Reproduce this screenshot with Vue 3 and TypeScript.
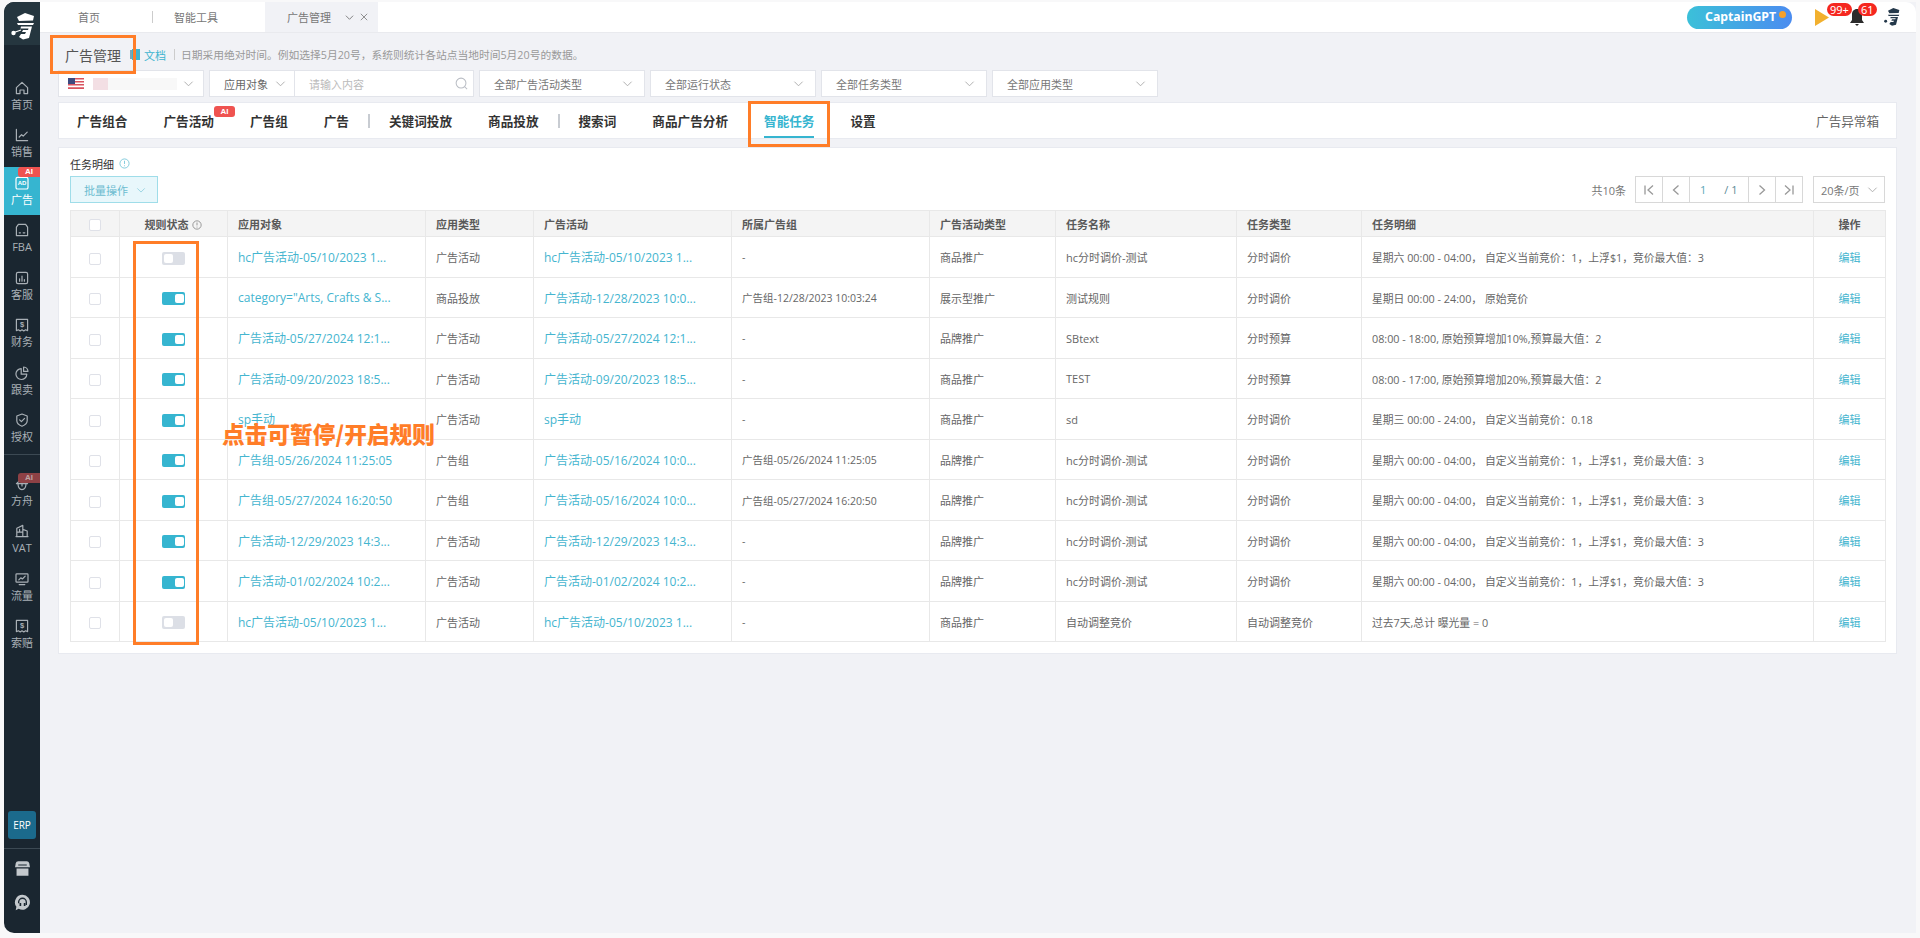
<script setup lang="ts">
interface NavItem { label: string; icon: string; active?: boolean; ai?: boolean; dim?: boolean; gap?: boolean }
const nav: NavItem[] = [
  { label: '首页', icon: 'home' },
  { label: '销售', icon: 'sales' },
  { label: '广告', icon: 'ad', active: true, ai: true },
  { label: 'FBA', icon: 'fba' },
  { label: '客服', icon: 'service' },
  { label: '财务', icon: 'money' },
  { label: '跟卖', icon: 'pie' },
  { label: '授权', icon: 'shield' },
  { label: '方舟', icon: 'ark', ai: true, dim: true, gap: true },
  { label: 'VAT', icon: 'vat' },
  { label: '流量', icon: 'traffic' },
  { label: '索赔', icon: 'money' },
]
const tabsA = ['广告组合', '广告活动', '广告组', '广告']
const tabsB = ['关键词投放', '商品投放']
const tabsC = ['搜索词', '商品广告分析', '智能任务', '设置']
const selects = ['全部广告活动类型', '全部运行状态', '全部任务类型', '全部应用类型']
const heads = ['应用对象', '应用类型', '广告活动', '所属广告组', '广告活动类型', '任务名称', '任务类型', '任务明细']
const d1 = '星期六 00:00 - 04:00， 自定义当前竞价：1，上浮$1，竞价最大值：3'
const hc = 'hc广告活动-05/10/2023 1...'
interface Row { on: boolean; target: string; type: string; camp: string; group: string; ctype: string; name: string; ttype: string; detail: string }
const rows: Row[] = [
  { on: false, target: hc, type: '广告活动', camp: hc, group: '-', ctype: '商品推广', name: 'hc分时调价-测试', ttype: '分时调价', detail: d1 },
  { on: true, target: 'category="Arts, Crafts & S...', type: '商品投放', camp: '广告活动-12/28/2023 10:0...', group: '广告组-12/28/2023 10:03:24', ctype: '展示型推广', name: '测试规则', ttype: '分时调价', detail: '星期日 00:00 - 24:00， 原始竞价' },
  { on: true, target: '广告活动-05/27/2024 12:1...', type: '广告活动', camp: '广告活动-05/27/2024 12:1...', group: '-', ctype: '品牌推广', name: 'SBtext', ttype: '分时预算', detail: '08:00 - 18:00, 原始预算增加10%,预算最大值：2' },
  { on: true, target: '广告活动-09/20/2023 18:5...', type: '广告活动', camp: '广告活动-09/20/2023 18:5...', group: '-', ctype: '商品推广', name: 'TEST', ttype: '分时预算', detail: '08:00 - 17:00, 原始预算增加20%,预算最大值：2' },
  { on: true, target: 'sp手动', type: '广告活动', camp: 'sp手动', group: '-', ctype: '商品推广', name: 'sd', ttype: '分时调价', detail: '星期三 00:00 - 24:00， 自定义当前竞价：0.18' },
  { on: true, target: '广告组-05/26/2024 11:25:05', type: '广告组', camp: '广告活动-05/16/2024 10:0...', group: '广告组-05/26/2024 11:25:05', ctype: '品牌推广', name: 'hc分时调价-测试', ttype: '分时调价', detail: d1 },
  { on: true, target: '广告组-05/27/2024 16:20:50', type: '广告组', camp: '广告活动-05/16/2024 10:0...', group: '广告组-05/27/2024 16:20:50', ctype: '品牌推广', name: 'hc分时调价-测试', ttype: '分时调价', detail: d1 },
  { on: true, target: '广告活动-12/29/2023 14:3...', type: '广告活动', camp: '广告活动-12/29/2023 14:3...', group: '-', ctype: '品牌推广', name: 'hc分时调价-测试', ttype: '分时调价', detail: d1 },
  { on: true, target: '广告活动-01/02/2024 10:2...', type: '广告活动', camp: '广告活动-01/02/2024 10:2...', group: '-', ctype: '品牌推广', name: 'hc分时调价-测试', ttype: '分时调价', detail: d1 },
  { on: false, target: hc, type: '广告活动', camp: hc, group: '-', ctype: '商品推广', name: '自动调整竞价', ttype: '自动调整竞价', detail: '过去7天,总计 曝光量 = 0' },
]
</script>

<template>
  <div class="shell">
    <aside class="side">
      <div class="logo">
        <svg width="24" height="27" viewBox="0 0 24 27">
          <path d="M6 4 14 0l9 3-1 4.500L8 8z" fill="#fff" />
          <path d="M6 10h17l-1 2H7z" fill="#fff" />
          <path d="M10 13.500h11L18 25l-6 1.500-4-2.500 2-3h4l1-2H11l1-2h5l.5-1.500H9.500z" fill="#fff" />
          <circle cx="2.500" cy="20" r="2.200" fill="#fff" />
          <path d="M3 19.500 10 17" stroke="#fff" stroke-width="1.300" />
        </svg>
      </div>
      <nav class="nav">
        <template v-for="n in nav" :key="n.label">
          <div v-if="n.gap" class="nav-line"></div>
          <div class="nav-item" :class="{ active: n.active }">
            <span v-if="n.ai" class="nav-ai" :class="{ dim: n.dim }">AI</span>
            <svg class="nav-icon" viewBox="0 0 20 20" fill="none" stroke="currentColor" stroke-width="1.500" stroke-linejoin="round" stroke-linecap="round">
              <template v-if="n.icon === 'home'"><path d="M3 9.500 10 3l7 6.500V17h-4.500v-4.500h-5V17H3z" /></template>
              <template v-else-if="n.icon === 'sales'"><path d="M3 3v14h14" /><path d="M6.500 12.500 9.500 9.500l2 2 5-5" /></template>
              <template v-else-if="n.icon === 'ad'"><rect x="2.500" y="3" width="15" height="14.500" rx="2" /><text x="10" y="13" text-anchor="middle" font-size="7.500" font-weight="700" fill="currentColor" stroke="none" font-family="Liberation Sans, sans-serif">AD</text></template>
              <template v-else-if="n.icon === 'fba'"><path d="M3 6.500 5.500 3h9L17 6.500V17H3z" /><path d="M6.500 13.500h1.500M11.500 13.500h2" /></template>
              <template v-else-if="n.icon === 'service'"><rect x="3" y="3" width="14" height="14" rx="2" /><path d="M7 14v-3M10 14V7.500M13 14v-2" /></template>
              <template v-else-if="n.icon === 'money'"><path d="M3 3h14v14l-2.500-1-2.300 1.500L10 16l-2.200 1.500L5.500 16 3 17z" /><text x="10" y="13" text-anchor="middle" font-size="9.500" font-weight="700" fill="currentColor" stroke="none" font-family="Liberation Sans, sans-serif">$</text></template>
              <template v-else-if="n.icon === 'pie'"><path d="M9 4.500a6.800 6.800 0 1 0 7 7H9z" /><path d="M12 2.500a6 6 0 0 1 5.500 5.500H12z" /></template>
              <template v-else-if="n.icon === 'shield'"><path d="M10 2.500 16.500 5v6c0 3-3 5.500-6.500 6.800C6.500 16.500 3.500 14 3.500 11V5z" /><path d="m7 9.800 2.300 2.200L13.200 8" /></template>
              <template v-else-if="n.icon === 'ark'"><path d="M3 9.500 10 3.500l7 6z" /><path d="M5 9.500c0 5 2 7.500 5 7.500s5-2.500 5-7.500" /><path d="M10 9.500v3" /></template>
              <template v-else-if="n.icon === 'vat'"><path d="M3.500 17V6.500L11 3v14M11 8l5.500 2v7M2.500 17h15M7 8v3.500M3.500 11.500H11" /></template>
              <template v-else><rect x="2.500" y="3.500" width="15" height="10.500" rx="1" /><path d="M6 11l2.500-2.500 2 1.500 3.500-3.500M6.500 17h7" /></template>
            </svg>
            <span class="nav-label">{{ n.label }}</span>
          </div>
        </template>
      </nav>
      <div class="erp">ERP</div>
      <div class="side-line"></div>
      <svg class="side-tool" viewBox="0 0 20 20" width="17" height="17">
        <path d="M5 1.500h10c1.500 0 2.500 1 3 2.500l.8 4.500H1.200L2 4c.5-1.500 1.500-2.500 3-2.500z" fill="#c3c8cc" />
        <path d="M3 10h14v8.500H3z" fill="#c3c8cc" />
        <path d="M5 6h10" stroke="#1a2630" stroke-width="1.200" />
      </svg>
      <svg class="side-tool second" viewBox="0 0 20 20" width="17" height="17">
        <path d="M10 1a8.800 8.800 0 1 1-4.500 16.400L2 19l.8-4A8.800 8.800 0 0 1 10 1z" fill="#c3c8cc" />
        <path d="M5.500 11V9.500a4.500 4.500 0 0 1 9 0V13" fill="none" stroke="#1a2630" stroke-width="1.600" />
        <path d="M6.500 10.500h2v3.500h-2zM11.500 10.500h2V14h-2z" fill="#1a2630" />
      </svg>
    </aside>

    <main class="main">
      <header class="top">
        <div class="page-tab">首页</div>
        <i class="page-sep"></i>
        <div class="page-tab wide">智能工具</div>
        <div class="page-tab current">
          广告管理
          <svg width="9" height="9" viewBox="0 0 10 10" fill="none" stroke="#777" stroke-width="1"><path d="m1 3 4 4 4-4" /></svg>
          <svg width="8" height="8" viewBox="0 0 10 10" fill="none" stroke="#777" stroke-width="1"><path d="m1 1 8 8M9 1 1 9" /></svg>
        </div>
        <div class="top-right">
          <div class="gpt">CaptainGPT<i></i></div>
          <div class="bell-wrap play">
            <svg width="14" height="17" viewBox="0 0 14 17"><path d="M0 0 14 8.500 0 17z" fill="#f2b02e" /></svg>
            <span class="badge">99+</span>
          </div>
          <div class="bell-wrap bell">
            <svg width="14" height="17" viewBox="0 0 14 17"><path d="M7 0c3 0 5 2.300 5 5.500V11l2 3H0l2-3V5.500C2 2.300 4 0 7 0z" fill="#2b2b2b" /><path d="M5 15h4l-2 2z" fill="#2b2b2b" /></svg>
            <span class="badge">61</span>
          </div>
          <svg class="mini-logo" width="16" height="18" viewBox="0 0 24 27">
            <path d="M6 4 14 0l9 3-1 4.500L8 8z" fill="#24384a" />
            <path d="M6 10h17l-1 2H7z" fill="#24384a" />
            <path d="M10 13.500h11L18 25l-6 1.500-4-2.500 2-3h4l1-2H11l1-2h5l.5-1.500H9.500z" fill="#24384a" />
            <circle cx="2.500" cy="20" r="2.200" fill="#24384a" />
          </svg>
        </div>
      </header>

      <div class="content">
        <div class="title-row">
          <div class="title">广告管理<span class="mark title-mark"></span></div>
          <svg width="10" height="11" viewBox="0 0 10 11"><path d="M0 1h2v9H0z" fill="#7aa7b5" /><path d="M2 0h8v11H2z" fill="#3db4cf" /></svg>
          <span class="doc">文档</span>
          <i class="title-sep"></i>
          <span class="hint">日期采用绝对时间。例如选择5月20号，系统则统计各站点当地时间5月20号的数据。</span>
        </div>

        <div class="filters">
          <div class="box site">
            <svg width="16" height="11" viewBox="0 0 16 11">
              <rect width="16" height="11" fill="#fff" />
              <path d="M0 0h16v1.500H0zM0 3h16v1.500H0zM0 6h16v1.500H0zM0 9.300h16V11H0z" fill="#d9535f" />
              <rect width="7" height="6" fill="#3d4a80" />
            </svg>
            <span class="blur-a"></span><span class="blur-b"></span>
            <svg class="chev" viewBox="0 0 12 12"><path d="m1.500 4 4.500 4.500L10.500 4" /></svg>
          </div>
          <div class="box target">
            <div class="target-l">应用对象<svg class="chev" viewBox="0 0 12 12"><path d="m1.500 4 4.500 4.500L10.500 4" /></svg></div>
            <div class="target-r">
              <span>请输入内容</span>
              <svg width="13" height="13" viewBox="0 0 14 14" fill="none" stroke="#b9bdc4" stroke-width="1.100"><circle cx="6.500" cy="6.500" r="5.300" /><path d="m10.500 10.500 2.500 2.500" /></svg>
            </div>
          </div>
          <div v-for="s in selects" :key="s" class="box pick">
            <span>{{ s }}</span>
            <svg class="chev" viewBox="0 0 12 12"><path d="m1.500 4 4.500 4.500L10.500 4" /></svg>
          </div>
        </div>

        <div class="tabs">
          <div v-for="t in tabsA" :key="t" class="tab">{{ t }}<span v-if="t === '广告活动'" class="tab-ai">AI</span></div>
          <i class="tab-sep"></i>
          <div v-for="t in tabsB" :key="t" class="tab">{{ t }}</div>
          <i class="tab-sep"></i>
          <div v-for="t in tabsC" :key="t" class="tab" :class="{ on: t === '智能任务' }">{{ t }}<span v-if="t === '智能任务'" class="mark tab-mark"></span></div>
          <div class="tab-end">广告异常箱</div>
        </div>

        <section class="card">
          <div class="card-title">任务明细
            <svg width="11" height="11" viewBox="0 0 12 12" fill="none" stroke="#7cc8da"><circle cx="6" cy="6" r="5" /><path d="M6 3v3.500M6 8v1" /></svg>
          </div>
          <div class="tools">
            <div class="batch">批量操作<svg viewBox="0 0 12 12" width="10" height="10" fill="none" stroke="#8ecfdf"><path d="m1.500 4 4.500 4.500L10.500 4" /></svg></div>
            <div class="pager">
              <span class="total">共10条</span>
              <div class="pg">
                <b><svg viewBox="0 0 12 12"><path d="M2 1.500v9M10 1.500 5 6l5 4.500" /></svg></b>
                <b><svg viewBox="0 0 12 12"><path d="M8.500 1.500 3.500 6l5 4.500" /></svg></b>
                <b class="num"><em>1</em><u>/ 1</u></b>
                <b><svg viewBox="0 0 12 12"><path d="M3.500 1.500 8.500 6l-5 4.500" /></svg></b>
                <b><svg viewBox="0 0 12 12"><path d="M2 1.500 7 6l-5 4.500M10 1.500v9" /></svg></b>
              </div>
              <div class="size">20条/页<svg class="chev" viewBox="0 0 12 12"><path d="m1.500 4 4.500 4.500L10.500 4" /></svg></div>
            </div>
          </div>

          <table class="grid">
            <colgroup>
              <col class="w49" /><col class="w108" /><col class="w198" /><col class="w108" />
              <col class="w198" /><col class="w198" /><col class="w126" /><col class="w181" />
              <col class="w125" /><col class="w452" /><col class="w72" />
            </colgroup>
            <thead>
              <tr>
                <th class="c"><i class="chk head"></i></th>
                <th class="c">规则状态
                  <svg width="10" height="10" viewBox="0 0 12 12" fill="none" stroke="#888"><circle cx="6" cy="6" r="5" /><path d="M6 3v3.500M6 8v1" /></svg>
                </th>
                <th v-for="h in heads" :key="h">{{ h }}</th>
                <th class="c">操作</th>
              </tr>
            </thead>
            <tbody>
              <tr v-for="(r, i) in rows" :key="i">
                <td class="c"><i class="chk"></i></td>
                <td class="c"><span class="sw" :class="{ on: r.on }"><i></i></span></td>
                <td class="link">{{ r.target }}</td>
                <td>{{ r.type }}</td>
                <td class="link">{{ r.camp }}</td>
                <td class="sm">{{ r.group }}</td>
                <td>{{ r.ctype }}</td>
                <td>{{ r.name }}</td>
                <td>{{ r.ttype }}</td>
                <td class="detail">{{ r.detail }}</td>
                <td class="c edit">编辑</td>
              </tr>
            </tbody>
          </table>
          <div class="mark status-mark"></div>
          <div class="note">点击可暂停/开启规则</div>
        </section>
      </div>
    </main>
  </div>
</template>

<style>
html, body { margin: 0; background: #f8f8f9; }
</style>

<style scoped>
* { box-sizing: border-box; }
.shell { display: flex; width: 1920px; height: 938px; padding: 2px 4px 5px; font-family: "Open Sans", "Noto Sans CJK SC", sans-serif; font-size: 11px; color: #666; overflow: hidden; }
.side { width: 36px; flex: none; background: #1a2630; border-radius: 10px 0 0 10px; display: flex; flex-direction: column; align-items: center; overflow: hidden; }
.logo { width: 100%; height: 43px; background: #25363f; display: flex; align-items: center; justify-content: center; flex: none; padding: 6px 0 0 2px; }
.nav { width: 100%; padding-top: 27px; flex: 1; }
.nav-item { position: relative; height: 47.500px; display: flex; flex-direction: column; align-items: center; justify-content: center; color: #a9b0b6; }
.nav-item.active { background: #36b5d0; color: #fff; }
.nav-icon { width: 16px; height: 16px; }
.nav-label { font-size: 11px; line-height: 15px; margin-top: 1px; }
.nav-ai { position: absolute; top: 0; right: 0; width: 22px; height: 10px; background: #ef5350; color: #fff; font-size: 8px; line-height: 10px; text-align: center; border-radius: 3px 0 0 3px; font-family: "Liberation Sans", sans-serif; font-weight: 700; }
.nav-ai.dim { background: #8e4145; color: #bfa5a5; top: 5px; }
.nav-line { height: 1px; background: #3c4953; margin-top: 2px; margin-bottom: 13px; }
.erp { width: 28px; height: 28px; background: #1b6a8c; color: #fff; border-radius: 3px; text-align: center; line-height: 28px; font-size: 10px; flex: none; }
.side-line { width: 100%; height: 1px; background: #3c4953; margin: 9px 0 11px; flex: none; }
.side-tool { flex: none; }
.side-tool.second { margin-top: 17px; margin-bottom: 22px; }

.main { flex: 1; min-width: 0; background: #f1f2f6; display: flex; flex-direction: column; }
.top { height: 31px; background: #fff; border-radius: 0 10px 0 0; border-bottom: 1px solid #e9eaee; display: flex; align-items: stretch; flex: none; font-size: 11px; color: #777; }
.page-tab { width: 98px; display: flex; align-items: center; justify-content: center; }
.page-sep { width: 1px; height: 12px; background: #ccc; align-self: center; margin-left: 14px; }
.page-tab.wide { width: 86px; margin-right: 26px; }
.page-tab.current { width: 113px; background: #f1f2f6; gap: 6px; justify-content: flex-start; padding-left: 22px; }
.page-tab.current svg:first-of-type { margin-left: 8px; }
.top-right { margin-left: auto; display: flex; align-items: center; padding-right: 16px; }
.gpt { position: relative; width: 105px; height: 23px; border-radius: 12px; background: linear-gradient(90deg, #3bc0d9, #4b8cf0); color: #fff; font-size: 12.300px; font-weight: 700; line-height: 22px; padding-left: 18px; font-family: "Noto Sans", sans-serif; }
.gpt i { position: absolute; right: 6px; top: 5px; width: 7px; height: 7px; border-radius: 50%; background: #f5a02a; }
.bell-wrap { position: relative; display: flex; height: 17px; }
.play { margin-left: 23px; }
.bell { margin-left: 21px; }
.badge { position: absolute; top: -6px; left: 12px; background: #f5271f; color: #fff; font-size: 11px; line-height: 13px; padding: 0 3px; border-radius: 7px; white-space: nowrap; font-family: "Noto Sans", sans-serif; }
.bell .badge { left: 8px; }
.mini-logo { margin-left: 20px; }

.content { flex: 1; padding: 0 19px 0 18px; position: relative; }
.title-row { height: 37px; display: flex; align-items: center; padding-left: 7px; padding-top: 6px; }
.title { position: relative; font-size: 14px; color: #555; margin-right: 9px; }
.mark { position: absolute; border: 3px solid #ff7d28; pointer-events: none; }
.title-mark { left: -15px; right: -15px; top: -10px; bottom: -9px; }
.doc { color: #3db4cf; margin-left: 4px; }
.title-sep { width: 1px; height: 11px; background: #ccc; margin: 0 6px 0 8px; }
.hint { color: #999; font-size: 10.750px; }

.filters { display: flex; gap: 5px; height: 27px; }
.box { background: #fff; border: 1px solid #e2e4ea; height: 27px; display: flex; align-items: center; color: #777; }
.site { width: 146px; padding: 0 9px; }
.blur-a { width: 15px; height: 12px; background: #f3dfe4; margin-left: 9px; }
.blur-b { width: 69px; height: 12px; background: #f8f8f8; }
.chev { width: 11px; height: 11px; fill: none; stroke: #aaa; stroke-width: 1; flex: none; }
.site .chev { margin-left: auto; }
.target { width: 265px; }
.target-l { width: 85px; height: 100%; border-right: 1px solid #e2e4ea; display: flex; align-items: center; padding-left: 14px; gap: 7px; color: #666; white-space: nowrap; }
.target-r { flex: 1; display: flex; align-items: center; justify-content: space-between; padding: 0 5px 0 14px; color: #bbb; }
.pick { width: 166px; padding: 0 11px 0 14px; justify-content: space-between; }

.tabs { margin-top: 5px; height: 37px; background: #fff; border: 1px solid #e8eaf0; display: flex; align-items: center; }
.tab { position: relative; height: 100%; display: flex; align-items: center; padding: 0 18px; font-size: 12.620px; font-weight: 700; color: #333; white-space: nowrap; }
.tab.on { color: #36b5d0; }
.tab.on::after { content: ""; position: absolute; left: 18px; right: 18px; bottom: 0; height: 2px; background: #36b5d0; }
.tab-mark { left: 2px; right: 2px; top: -2px; bottom: -9px; }
.tab-ai { position: absolute; right: -3px; top: 3px; width: 21px; height: 11px; background: #ef5350; color: #fff; font-size: 8px; line-height: 11px; text-align: center; border-radius: 3px; font-family: "Liberation Sans", sans-serif; }
.tab-sep { width: 2px; height: 14px; background: #c8ccd2; margin: 0 1px; }
.tab-end { margin-left: auto; padding-right: 17px; font-size: 12.600px; color: #666; }

.card { position: relative; margin-top: 8px; background: #fff; border: 1px solid #e8eaf0; padding: 0 11px 10px; height: 507px; }
.card-title { height: 28px; padding-top: 3px; font-size: 11px; font-weight: 400; color: #333; display: flex; align-items: center; gap: 5px; }
.tools { height: 27px; display: flex; justify-content: space-between; margin-bottom: 7px; }
.batch { width: 88px; height: 27px; background: #e8f7fb; border: 1px solid #9fdde9; color: #6cbcd0; display: flex; align-items: center; gap: 8px; padding-left: 13px; }
.pager { display: flex; align-items: center; }
.total { margin-right: 10px; color: #777; }
.pg { display: flex; height: 27px; }
.pg b { width: 28px; border: 1px solid #d8d8d8; margin-left: -1px; display: flex; align-items: center; justify-content: center; font-weight: 400; }
.pg b svg { width: 12px; height: 12px; fill: none; stroke: #999; stroke-width: 1.300; }
.pg .num { width: 60px; justify-content: flex-start; padding-left: 10px; gap: 18px; }
.pg em { font-style: normal; color: #5ca6b8; }
.pg u { text-decoration: none; color: #5c8a96; }
.size { width: 72px; height: 27px; margin-left: 10px; border: 1px solid #d8d8d8; display: flex; align-items: center; justify-content: space-between; padding: 0 6px 0 7px; color: #777; }

.grid { width: 1815px; table-layout: fixed; border-collapse: collapse; }
.w49 { width: 49px; } .w108 { width: 108px; } .w198 { width: 198px; } .w126 { width: 126px; }
.w181 { width: 181px; } .w125 { width: 125px; } .w452 { width: 452px; } .w72 { width: 72px; }
.grid th, .grid td { border: 1px solid #e8e8e8; padding: 0 0 0 10px; text-align: left; white-space: nowrap; overflow: hidden; }
.grid th { height: 26px; background: #f4f4f4; font-weight: 700; color: #5a5a5a; font-size: 11px; }
.grid td { height: 40px; font-size: 11px; color: #666; }
.grid tbody tr:nth-child(odd) td { height: 41px; }
.grid .c { text-align: center; padding: 0; }
.grid th svg { vertical-align: -1px; margin-left: 1px; }
.grid .link { color: #45b5cf; font-size: 12px; }
.grid .sm { font-size: 10.500px; }
.grid .detail { font-size: 10.800px; }
.grid .edit { color: #45b5cf; }
.chk { display: inline-block; width: 12px; height: 12px; border: 1px solid #dfe1e8; border-radius: 2px; vertical-align: middle; background: #fff; }
.sw { display: inline-block; width: 23px; height: 13px; background: #dcdfe6; border-radius: 2px; position: relative; vertical-align: middle; }
.sw.on { background: #36b5d0; }
.sw i { position: absolute; top: 2px; left: 2px; width: 9px; height: 9px; background: #fff; border-radius: 2px; }
.sw.on i { left: 13px; }
.status-mark { left: 74px; top: 93px; width: 66px; height: 404px; }
.note { position: absolute; left: 163px; top: 270px; color: #ff7d28; font-size: 22.700px; font-weight: 900; white-space: nowrap; line-height: 32px; font-family: "Noto Sans CJK SC", sans-serif; }
</style>
